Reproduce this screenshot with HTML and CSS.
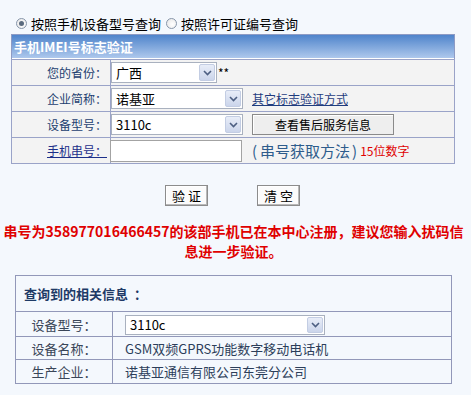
FILE: index.html
```html
<!DOCTYPE html>
<html lang="zh-CN">
<head>
<meta charset="utf-8">
<title>手机IMEI号标志验证</title>
<link rel="stylesheet" href="styles.css">
</head>
<body>
<div class="page">
  <div class="mode">
    <span class="radio on"></span><span class="mode-label">按照手机设备型号查询</span>
    <span class="radio second"></span><span class="mode-label">按照许可证编号查询</span>
  </div>

  <div class="panel">
    <div class="panel-head">手机IMEI号标志验证</div>
    <table class="form">
      <tr>
        <th>您的省份：</th>
        <td><div class="sel w-prov"><span>广西</span><i class="arr"><svg width="9" height="6" viewBox="0 0 9 6"><path d="M1 1l3.5 3.5L8 1" fill="none" stroke="#4d5f82" stroke-width="1.6"/></svg></i></div><span class="req">**</span></td>
      </tr>
      <tr>
        <th>企业简称：</th>
        <td><div class="sel w-wide"><span>诺基亚</span><i class="arr"><svg width="9" height="6" viewBox="0 0 9 6"><path d="M1 1l3.5 3.5L8 1" fill="none" stroke="#4d5f82" stroke-width="1.6"/></svg></i></div><a class="other" href="#">其它标志验证方式</a></td>
      </tr>
      <tr>
        <th>设备型号：</th>
        <td><div class="sel w-wide"><span>3110c</span><i class="arr"><svg width="9" height="6" viewBox="0 0 9 6"><path d="M1 1l3.5 3.5L8 1" fill="none" stroke="#4d5f82" stroke-width="1.6"/></svg></i></div><span class="btn-big">查看售后服务信息</span></td>
      </tr>
      <tr>
        <th><a class="lbl-link" href="#">手机串号：</a></th>
        <td><span class="inp"></span><a class="howto" href="#"><span class="par">(</span>串号获取方法<span class="par">)</span></a><span class="hint">15位数字</span></td>
      </tr>
    </table>
  </div>

  <div class="actions">
    <span class="btn">验 证</span>
    <span class="btn">清 空</span>
  </div>

  <p class="msg">串号为358977016466457的该部手机已在本中心注册，建议您输入扰码信<br>息进一步验证。</p>

  <table class="result">
    <tr><th colspan="2" class="result-head">查询到的相关信息&nbsp;&nbsp;：</th></tr>
    <tr class="r1">
      <td class="k">设备型号：</td>
      <td class="v"><div class="sel w-res"><span>3110c</span><i class="arr"><svg width="9" height="6" viewBox="0 0 9 6"><path d="M1 1l3.5 3.5L8 1" fill="none" stroke="#4d5f82" stroke-width="1.6"/></svg></i></div></td>
    </tr>
    <tr class="r2">
      <td class="k">设备名称：</td>
      <td class="v">GSM双频GPRS功能数字移动电话机</td>
    </tr>
    <tr class="r3">
      <td class="k">生产企业：</td>
      <td class="v">诺基亚通信有限公司东莞分公司</td>
    </tr>
  </table>
</div>
</body>
</html>
```

FILE: styles.css
```css
html, body {
  margin: 0;
  padding: 0;
}
body {
  background: #f4f8fd;
  font-family: "Noto Sans CJK SC", "Liberation Sans", sans-serif;
  font-size: 12px;
  color: #000;
}
.page {
  padding-top: 15px;
}

/* mode radios */
.mode {
  display: flex;
  align-items: center;
  height: 16px;
  margin-left: 16px;
  font-size: 13px;
  color: #000;
}
.radio {
  width: 11px;
  height: 11px;
  box-sizing: border-box;
  border: 1px solid #8796aa;
  border-radius: 50%;
  background: radial-gradient(circle at 60% 60%, #ffffff 0, #e4e4e4 100%);
  margin-right: 4px;
  position: relative;
}
.radio.second {
  margin-left: 5px;
}
.radio.on::after {
  content: "";
  position: absolute;
  left: 2px;
  top: 2px;
  width: 5px;
  height: 5px;
  border-radius: 50%;
  background: #5a6a7e;
}

/* panel */
.panel {
  margin: 3px 0 0 11px;
  width: 444px;
}
.panel-head {
  height: 25px;
  box-sizing: border-box;
  border: 1px solid #8e9bc4;
  border-bottom: none;
  background: linear-gradient(#4f84cb, #b2cbee);
  box-shadow: inset 0 -1px 0 #ffffff;
  color: #fff;
  font-weight: bold;
  font-size: 13px;
  line-height: 23px;
  padding-left: 2px;
}
.form {
  width: 444px;
  border-collapse: collapse;
  border: 1px solid #9aa3c8;
  background: #f3f3f3;
}
.form th,
.form td {
  border: 1px solid #9aa3c8;
  height: 25px;
  padding: 0;
  white-space: nowrap;
}
.form th {
  width: 95px;
  text-align: right;
  padding-right: 3px;
  font-weight: normal;
  color: #1d3f70;
  font-size: 12px;
}
.form td {
  padding-left: 0;
}
.lbl-link {
  color: #1c2f8a;
  text-decoration: underline;
}

/* select imitation */
.sel {
  display: inline-flex;
  align-items: center;
  vertical-align: middle;
  box-sizing: border-box;
  height: 21px;
  border: 1px solid #a9b1bf;
  background: #fff;
  padding-left: 4px;
  font-size: 13px;
  color: #000;
}
.sel .arr {
  margin-left: auto;
  margin-right: 1px;
  width: 16px;
  height: 17px;
  box-sizing: border-box;
  border: 1px solid #c3cde3;
  border-radius: 2px;
  background: linear-gradient(#e8edf8, #cbd5eb);
  display: flex;
  align-items: center;
  justify-content: center;
}
.w-prov { width: 106px; }
.w-wide { width: 132px; }
.w-res { width: 200px; height: 20px; }
.w-res .arr { height: 16px; }

.req {
  vertical-align: middle;
  margin-left: 1px;
  font-size: 12px;
}
.other {
  vertical-align: middle;
  margin-left: 9px;
  color: #1f3c7e;
  text-decoration: underline;
  font-size: 12px;
}
.btn-big {
  display: inline-block;
  vertical-align: middle;
  margin-left: 9px;
  width: 142px;
  height: 21px;
  box-sizing: border-box;
  border: 1px solid #8a8a8a;
  box-shadow: inset 1px 1px 0 #fff;
  background: #eeeeee;
  text-align: center;
  line-height: 19px;
  font-size: 12px;
}
.inp {
  display: inline-block;
  vertical-align: middle;
  width: 132px;
  height: 22px;
  margin-left: -1px;
  box-sizing: border-box;
  border: 1px solid #a3a3a3;
  background: #fff;
}
.howto {
  vertical-align: middle;
  margin-left: 10px;
  font-size: 15px;
  color: #2e5c8c;
  text-decoration: none;
}
.howto .par {
  margin: 0 3px 0 0;
}
.howto .par + .par,
.howto .par:last-child {
  margin: 0 0 0 2px;
}
.hint {
  vertical-align: middle;
  margin-left: 3px;
  color: #e00000;
  font-size: 12px;
}

/* actions */
.actions {
  display: flex;
  justify-content: center;
  gap: 49px;
  margin-top: 21px;
  padding-right: 6px;
}
.btn {
  width: 43px;
  height: 21px;
  box-sizing: border-box;
  border: 1px solid #8c8c8c;
  box-shadow: inset -1px -1px 0 #b8b8b8, inset 1px 1px 0 #fff;
  background: #fbfbfb;
  text-align: center;
  line-height: 19px;
  font-size: 13px;
}

/* message */
.msg {
  margin: 15px 0 0;
  text-align: center;
  white-space: nowrap;
  color: #e00000;
  font-weight: bold;
  font-size: 14px;
  line-height: 20px;
  padding-right: 4px;
}

/* result */
.result {
  margin: 14px 0 0 15px;
  width: 437px;
  border-collapse: collapse;
  border: 1px solid #9298b9;
  font-size: 13px;
}
.result th,
.result td {
  border: 1px solid #9298b9;
  padding: 0;
  white-space: nowrap;
}
.result-head {
  height: 35px;
  text-align: left;
  padding-left: 8px !important;
  font-weight: bold;
  color: #1e3a66;
}
.result .k {
  width: 96px;
  text-align: center;
  color: #3a4658;
}
.result .v {
  padding-left: 12px;
  color: #2c3e5a;
}
.r1 td { height: 24px; }
.r2 td { height: 22px; }
.r3 td { height: 23px; }
```
